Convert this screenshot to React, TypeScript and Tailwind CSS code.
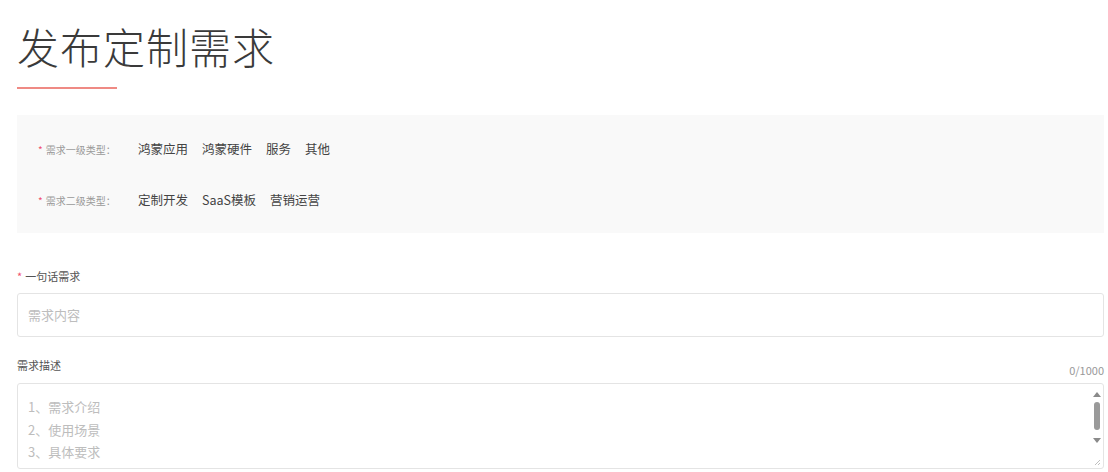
import React from "react";

const level1 = ["鸿蒙应用", "鸿蒙硬件", "服务", "其他"];
const level2 = ["定制开发", "SaaS模板", "营销运营"];

function TypeRow({ label, items }: { label: string; items: string[] }) {
  return (
    <div className="flex h-[20px] items-center">
      <div className="flex w-[100px] items-center text-[10px] text-[#9a9a9a]">
        <span className="mr-[3px] text-[#f0506e]">*</span>
        <span>{label}</span>
      </div>
      <div className="flex items-center gap-[14px] text-[12.5px] text-[#444]">
        {items.map((it) => (
          <span key={it}>{it}</span>
        ))}
      </div>
    </div>
  );
}

export default function App() {
  return (
    <div
      className="h-[472px] w-[1108px] overflow-hidden bg-white pl-[17px] pr-[4px]"
      style={{ fontFamily: "'Noto Sans CJK SC', 'Noto Sans', sans-serif" }}
    >
      <h1 className="mt-[16px] h-[60px] text-[42px] font-light leading-[60px] tracking-[1px] text-[#3a3a3a]">
        发布定制需求
      </h1>
      <div className="mt-[11px] h-[2px] w-[100px] bg-[#ef8a84]" />

      <div className="mt-[26px] flex h-[118px] flex-col gap-[31px] bg-[#f9f9f9] pl-[21px] pt-[24px]">
        <TypeRow label="需求一级类型：" items={level1} />
        <TypeRow label="需求二级类型：" items={level2} />
      </div>

      <div className="mt-[33px] flex h-[20px] items-center text-[11px] text-[#555]">
        <span className="mr-[3px] text-[#f0506e]">*</span>
        <span>一句话需求</span>
      </div>
      <div className="mt-[7px] flex h-[44px] items-center rounded-[3px] border border-[#e4e4e4] bg-white pl-[10px] text-[13px] text-[#bdbdbd]">
        需求内容
      </div>

      <div className="mt-[19px] flex h-[20px] items-end justify-between">
        <span className="mb-[3px] text-[11px] text-[#555]">需求描述</span>
        <span className="mb-[-2px] text-[11px] text-[#999]">0/1000</span>
      </div>
      <div className="relative mt-[7px] h-[86px] rounded-[3px] border border-[#e4e4e4] bg-white">
        <div className="pl-[10px] pt-[12px] text-[13px] leading-[22.5px] text-[#bdbdbd]">
          <div>1、需求介绍</div>
          <div>2、使用场景</div>
          <div>3、具体要求</div>
        </div>
        <div className="absolute right-0 top-0 flex h-full w-[13px] flex-col items-center">
          <div className="mt-[8px] h-0 w-0 border-x-[4px] border-b-[5px] border-x-transparent border-b-[#8a8a8a]" />
          <div className="mt-[5px] h-[28px] w-[6px] rounded-[3px] bg-[#9a9a9a]" />
          <div className="mt-[8px] h-0 w-0 border-x-[4px] border-t-[5px] border-x-transparent border-t-[#8a8a8a]" />
          <svg className="absolute bottom-[2px] right-[2px]" width="8" height="8" viewBox="0 0 8 8">
            <line x1="7" y1="2" x2="2" y2="7" stroke="#b0b0b0" strokeWidth="0.8" />
            <line x1="7" y1="5" x2="5" y2="7" stroke="#b0b0b0" strokeWidth="0.8" />
          </svg>
        </div>
      </div>
    </div>
  );
}
